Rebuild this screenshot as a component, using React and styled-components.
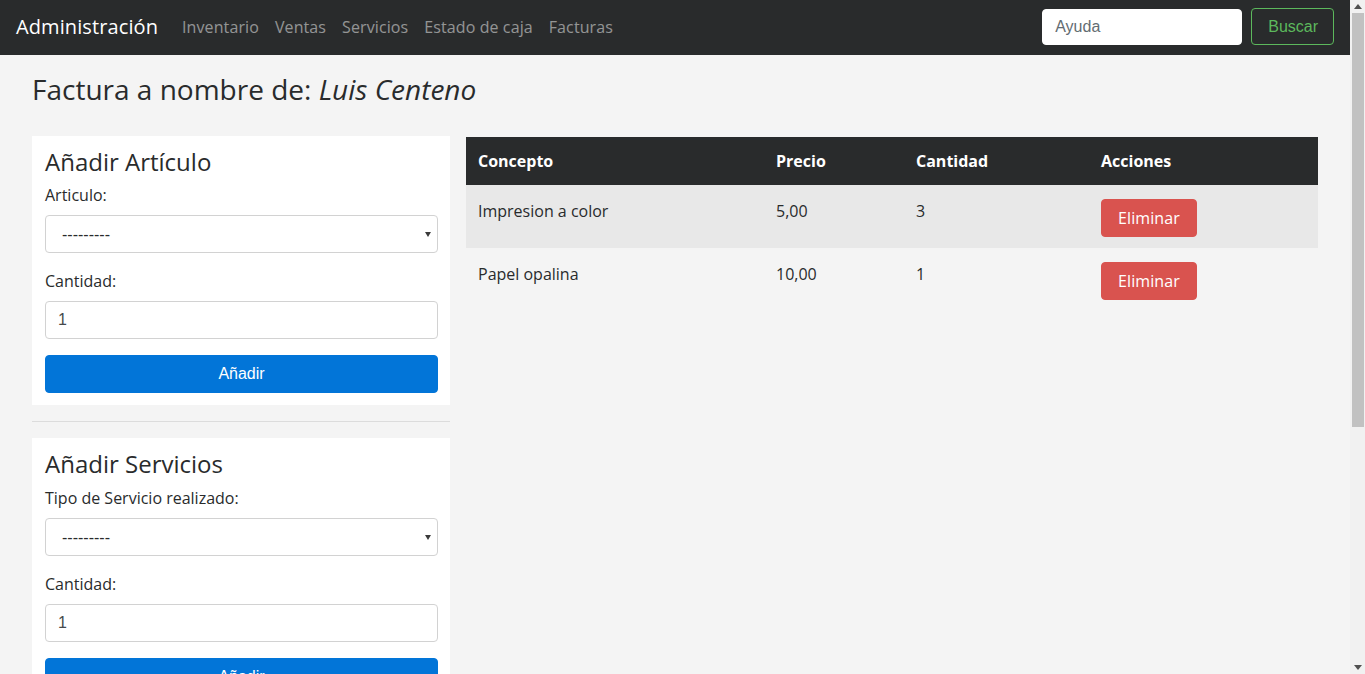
import React from "react";
import styled, { createGlobalStyle } from "styled-components";

const Global = createGlobalStyle`
  html, body { margin: 0; padding: 0; }
  body {
    background: #f4f4f4;
    color: #292b2c;
    font-family: "Open Sans", "Noto Sans", sans-serif;
    font-size: 16px;
    line-height: 1.5;
  }
  * { box-sizing: border-box; }
`;

const Page = styled.div`
  min-height: 1052px;
  margin-right: 15px;
`;

/* Drawing of the browser's classic vertical scrollbar, fixed over the right edge */
const ScrollBar = styled.div`
  position: fixed;
  top: 0;
  right: 0;
  width: 15px;
  height: 100vh;
  background: #f1f1f1;
  display: flex;
  flex-direction: column;
  align-items: stretch;
`;

const ScrollArrow = styled.div`
  height: 13px;
  display: flex;
  align-items: center;
  justify-content: center;
`;

const ScrollTrack = styled.div`
  flex: 1;
  padding: 0 1px 0 2px;
`;

const ScrollThumb = styled.div`
  height: 414px;
  background: #c1c1c1;
`;

const Navbar = styled.nav`
  height: 55px;
  background: #292b2c;
  display: flex;
  align-items: center;
  padding: 0 16px;
`;

const Brand = styled.a`
  color: #fff;
  font-size: 20px;
  line-height: 30px;
  margin-right: 16px;
  margin-top: -2px;
  text-decoration: none;
  letter-spacing: 0.1px;
`;

const NavList = styled.div`
  display: flex;
  flex: 1;
  margin-top: -2px;
`;

const NavLink = styled.a`
  color: rgba(255, 255, 255, 0.5);
  font-size: 16px;
  padding: 8px 8px;
  text-decoration: none;
  letter-spacing: 0.1px;
`;

const SearchForm = styled.form`
  display: flex;
  align-items: flex-start;
  align-self: flex-start;
  gap: 9px;
`;

const SearchInput = styled.input`
  width: 200px;
  height: 36px;
  margin-top: 9px;
  border: 1px solid #fff;
  border-radius: 4px;
  padding: 0 12px;
  font-family: "Liberation Sans", Arial, sans-serif;
  font-size: 16px;
  color: #464a4c;
  &::placeholder { color: #636c72; }
`;

const OutlineButton = styled.button`
  height: 37px;
  margin-top: 8px;
  padding: 0 15px 0 16px;
  background: transparent;
  border: 1px solid #5cb85c;
  border-radius: 4px;
  color: #5cb85c;
  font-family: "Liberation Sans", Arial, sans-serif;
  font-size: 16px;
`;

const Main = styled.main`
  padding: 16px 32px 0 32px;
`;

const Title = styled.h3`
  margin: 0 0 29px 0;
  font-size: 28px;
  font-weight: 400;
  line-height: 1.2;
  padding-top: 2px;
  em { font-style: italic; }
`;

const Grid = styled.div`
  display: grid;
  grid-template-columns: 418px 1fr;
  column-gap: 16px;
  align-items: start;
`;

const Column = styled.div`
  display: flex;
  flex-direction: column;
`;

const Card = styled.section`
  background: #fff;
  padding: 12px 12px 12px 13px;
`;

const CardTitle = styled.h4`
  margin: 0 0 7px 0;
  font-size: 24px;
  font-weight: 400;
  line-height: 1.2;
`;

const Label = styled.label`
  display: block;
  font-size: 16px;
  line-height: 24px;
  margin-bottom: 8px;
`;

const Field = styled.div`
  margin-bottom: 16px;
`;

const SelectWrap = styled.div`
  position: relative;
  &::after {
    content: "";
    position: absolute;
    right: 7px;
    top: 17px;
    border-left: 3px solid transparent;
    border-right: 3px solid transparent;
    border-top: 5px solid #3a3a3a;
    pointer-events: none;
  }
`;

const Select = styled.select`
  width: 100%;
  height: 38px;
  border: 1px solid #d2d2d2;
  border-radius: 4px;
  background: #fff;
  padding: 0 12px 0 16px;
  appearance: none;
  -webkit-appearance: none;
  font-family: "Liberation Sans", Arial, sans-serif;
  font-size: 16px;
  color: #292b2c;
`;

const Input = styled.input`
  width: 100%;
  height: 38px;
  border: 1px solid #d2d2d2;
  border-radius: 4px;
  padding: 0 12px;
  font-family: "Liberation Sans", Arial, sans-serif;
  font-size: 16px;
  color: #464a4c;
`;

const PrimaryButton = styled.button`
  width: 100%;
  height: 38px;
  background: #0275d8;
  border: 1px solid #0275d8;
  border-radius: 4px;
  color: #fff;
  font-family: "Liberation Sans", Arial, sans-serif;
  font-size: 16px;
`;

const Divider = styled.hr`
  border: 0;
  border-top: 1px solid #dcdcdc;
  margin: 16px 0 16px 0;
`;

const Table = styled.table`
  width: 100%;
  border-collapse: collapse;
  margin-top: 1px;
`;

const Th = styled.th`
  background: #292b2c;
  color: #fff;
  text-align: left;
  font-weight: 700;
  padding: 12px;
  line-height: 24px;
  width: ${(p) => p.$w || "auto"};
`;

const Tr = styled.tr`
  background: ${(p) => (p.$striped ? "#e8e8e8" : "transparent")};
`;

const Td = styled.td`
  padding: 14px 12px 11px 12px;
  vertical-align: top;
  line-height: 24px;
`;

const DangerButton = styled.button`
  display: block;
  height: 38px;
  padding: 0 16px;
  background: #d9534f;
  border: 1px solid #d9534f;
  border-radius: 4px;
  color: #fff;
  font-family: "Open Sans", sans-serif;
  font-size: 16px;
  letter-spacing: 0.1px;
`;

const rows = [
  { concepto: "Impresion a color", precio: "5,00", cantidad: "3" },
  { concepto: "Papel opalina", precio: "10,00", cantidad: "1" },
];

function AddCard({ title, label }) {
  return (
    <Card>
      <CardTitle>{title}</CardTitle>
      <Field>
        <Label>{label}</Label>
        <SelectWrap>
          <Select defaultValue="">
            <option value="">---------</option>
          </Select>
        </SelectWrap>
      </Field>
      <Field>
        <Label>Cantidad:</Label>
        <Input type="text" defaultValue="1" />
      </Field>
      <PrimaryButton type="button">Añadir</PrimaryButton>
    </Card>
  );
}

function FakeScrollbar() {
  return (
    <ScrollBar aria-hidden="true">
      <ScrollArrow>
        <svg width="8" height="5" viewBox="0 0 8 5">
          <polygon points="0,5 8,5 4,0" fill="#505050" />
        </svg>
      </ScrollArrow>
      <ScrollTrack>
        <ScrollThumb />
      </ScrollTrack>
      <ScrollArrow>
        <svg width="8" height="5" viewBox="0 0 8 5">
          <polygon points="0,0 8,0 4,5" fill="#505050" />
        </svg>
      </ScrollArrow>
    </ScrollBar>
  );
}

export default function App() {
  return (
    <Page>
      <Global />
      <Navbar>
        <Brand href="#">Administración</Brand>
        <NavList>
          <NavLink href="#">Inventario</NavLink>
          <NavLink href="#">Ventas</NavLink>
          <NavLink href="#">Servicios</NavLink>
          <NavLink href="#">Estado de caja</NavLink>
          <NavLink href="#">Facturas</NavLink>
        </NavList>
        <SearchForm onSubmit={(e) => e.preventDefault()}>
          <SearchInput placeholder="Ayuda" />
          <OutlineButton type="submit">Buscar</OutlineButton>
        </SearchForm>
      </Navbar>
      <Main>
        <Title>
          Factura a nombre de: <em>Luis Centeno</em>
        </Title>
        <Grid>
          <Column>
            <AddCard title="Añadir Artículo" label="Articulo:" />
            <Divider />
            <AddCard title="Añadir Servicios" label="Tipo de Servicio realizado:" />
          </Column>
          <Table>
            <thead>
              <tr>
                <Th $w="298px">Concepto</Th>
                <Th $w="140px">Precio</Th>
                <Th $w="185px">Cantidad</Th>
                <Th>Acciones</Th>
              </tr>
            </thead>
            <tbody>
              {rows.map((r, i) => (
                <Tr key={i} $striped={i % 2 === 0}>
                  <Td>{r.concepto}</Td>
                  <Td>{r.precio}</Td>
                  <Td>{r.cantidad}</Td>
                  <Td>
                    <DangerButton type="button">Eliminar</DangerButton>
                  </Td>
                </Tr>
              ))}
            </tbody>
          </Table>
        </Grid>
      </Main>
      <FakeScrollbar />
    </Page>
  );
}
